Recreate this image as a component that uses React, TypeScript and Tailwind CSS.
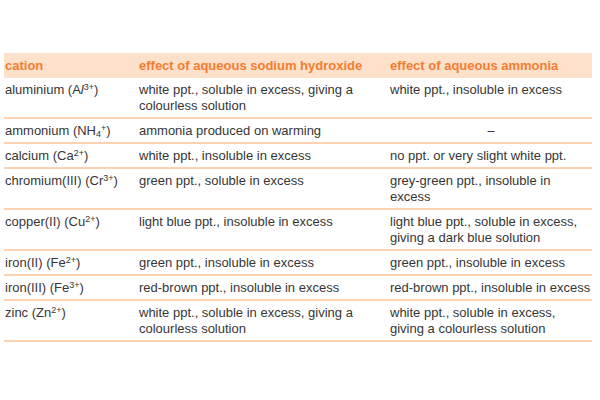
const sup = "text-[9px] leading-[0]"

// line breaks follow the printed table
const rows: { cation: React.ReactNode; naoh: string; nh3: string; center?: boolean }[] = [
  {
    cation: (
      <>
        aluminium (A<i>l</i>
        <sup className={sup}>3+</sup>)
      </>
    ),
    naoh: "white ppt., soluble in excess, giving a\ncolourless solution",
    nh3: "white ppt., insoluble in excess",
  },
  {
    cation: (
      <>
        ammonium (NH<sub className={sup}>4</sub>
        <sup className={sup}>+</sup>)
      </>
    ),
    naoh: "ammonia produced on warming",
    nh3: "–",
    center: true,
  },
  {
    cation: (
      <>
        calcium (Ca<sup className={sup}>2+</sup>)
      </>
    ),
    naoh: "white ppt., insoluble in excess",
    nh3: "no ppt. or very slight white ppt.",
  },
  {
    cation: (
      <>
        chromium(III) (Cr<sup className={sup}>3+</sup>)
      </>
    ),
    naoh: "green ppt., soluble in excess",
    nh3: "grey-green ppt., insoluble in\nexcess",
  },
  {
    cation: (
      <>
        copper(II) (Cu<sup className={sup}>2+</sup>)
      </>
    ),
    naoh: "light blue ppt., insoluble in excess",
    nh3: "light blue ppt., soluble in excess,\ngiving a dark blue solution",
  },
  {
    cation: (
      <>
        iron(II) (Fe<sup className={sup}>2+</sup>)
      </>
    ),
    naoh: "green ppt., insoluble in excess",
    nh3: "green ppt., insoluble in excess",
  },
  {
    cation: (
      <>
        iron(III) (Fe<sup className={sup}>3+</sup>)
      </>
    ),
    naoh: "red-brown ppt., insoluble in excess",
    nh3: "red-brown ppt., insoluble in excess",
  },
  {
    cation: (
      <>
        zinc (Zn<sup className={sup}>2+</sup>)
      </>
    ),
    naoh: "white ppt., soluble in excess, giving a\ncolourless solution",
    nh3: "white ppt., soluble in excess,\ngiving a colourless solution",
  },
]

export default function App() {
  return (
    <div className="w-[600px] h-[400px] bg-white pt-[53px] pl-[4px] font-['Liberation_Sans',Arial,sans-serif] text-[13px] text-[#363636]">
      <div className="w-[588px]">
        {/* header band */}
        <div className="grid grid-cols-[135px_251px_1fr] h-[25px] items-center bg-[#fde1cb] font-bold text-[#f47c30]">
          <div className="pl-[1px]">cation</div>
          <div>effect of aqueous sodium hydroxide</div>
          <div>effect of aqueous ammonia</div>
        </div>

        {rows.map((r, i) => (
          <div
            key={i}
            className="grid grid-cols-[135px_251px_1fr] pt-[4px] pb-[3px] leading-[16px] border-b-2 border-[#fdd2b3]"
          >
            <div className="pl-[1px]">{r.cation}</div>
            <div className="whitespace-pre">{r.naoh}</div>
            <div className={r.center ? "text-center" : "whitespace-pre"}>{r.nh3}</div>
          </div>
        ))}
      </div>
    </div>
  )
}
